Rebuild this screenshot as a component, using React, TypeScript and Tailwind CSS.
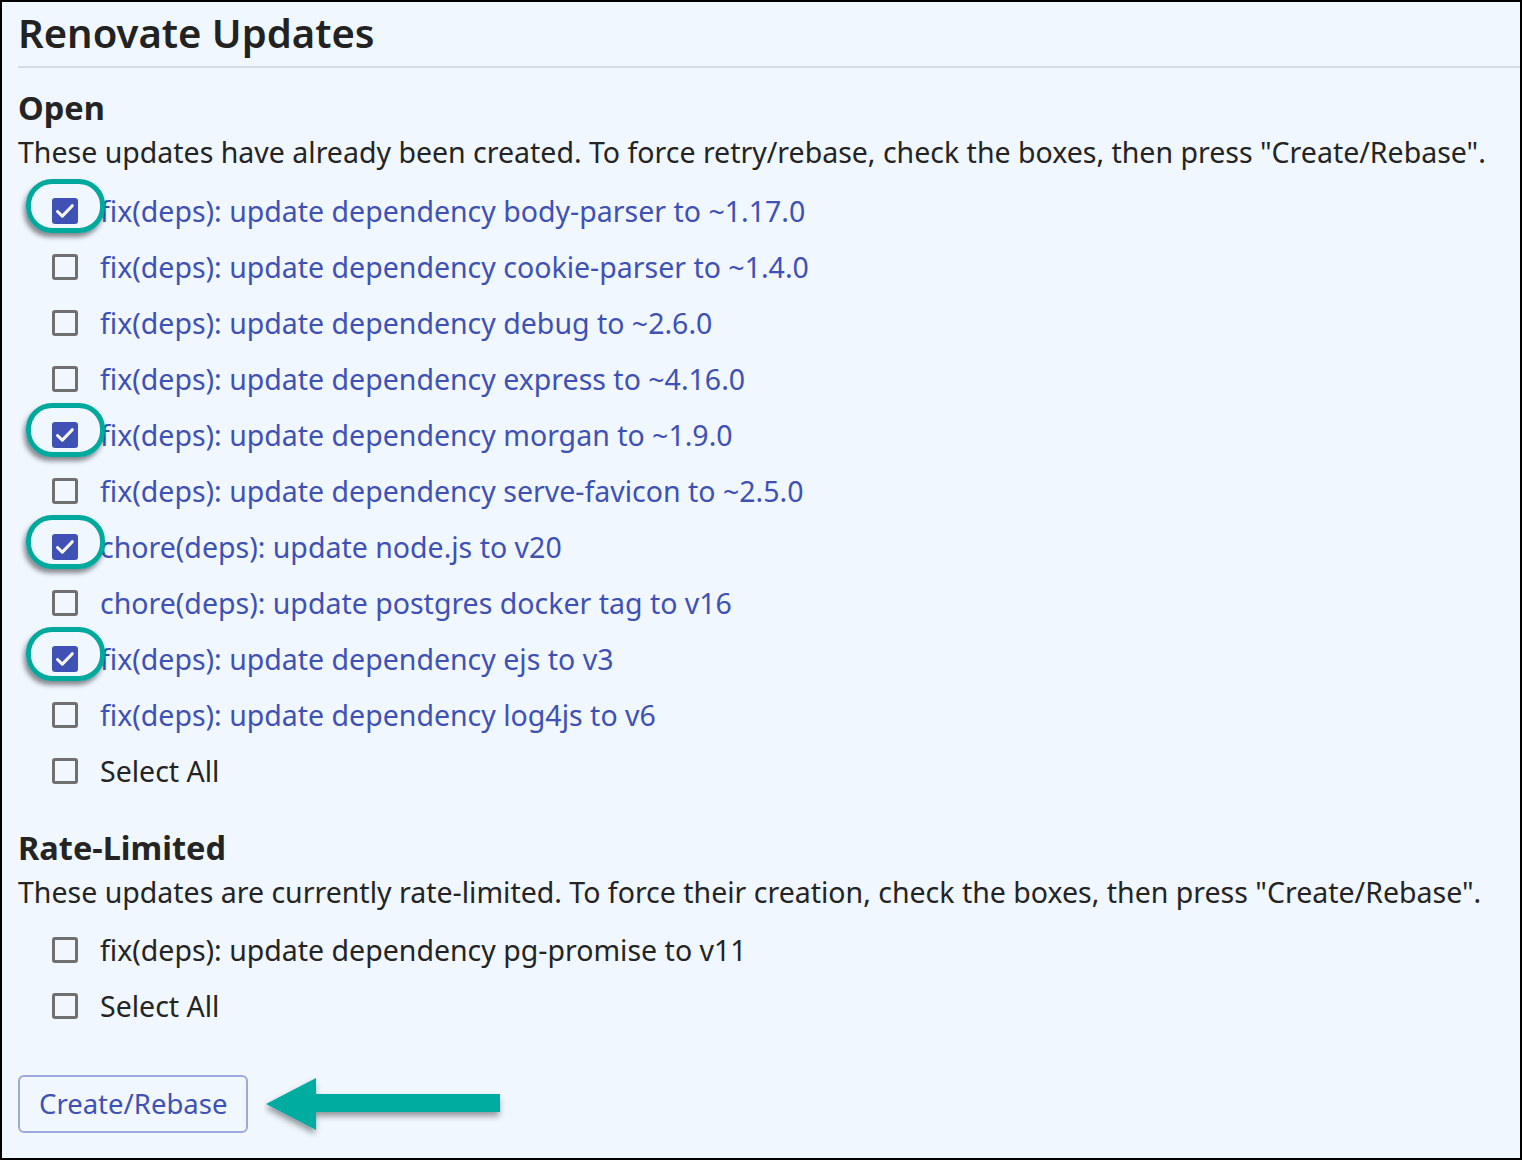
import React from 'react';

type Update = { title: string; checked?: boolean };

const openUpdates: Update[] = [
  { title: 'fix(deps): update dependency body-parser to ~1.17.0', checked: true },
  { title: 'fix(deps): update dependency cookie-parser to ~1.4.0' },
  { title: 'fix(deps): update dependency debug to ~2.6.0' },
  { title: 'fix(deps): update dependency express to ~4.16.0' },
  { title: 'fix(deps): update dependency morgan to ~1.9.0', checked: true },
  { title: 'fix(deps): update dependency serve-favicon to ~2.5.0' },
  { title: 'chore(deps): update node.js to v20', checked: true },
  { title: 'chore(deps): update postgres docker tag to v16' },
  { title: 'fix(deps): update dependency ejs to v3', checked: true },
  { title: 'fix(deps): update dependency log4js to v6' },
];

const rateLimited: Update[] = [
  { title: 'fix(deps): update dependency pg-promise to v11' },
];

const Checkbox = ({ checked }: { checked?: boolean }) =>
  checked ? (
    <span className="flex h-[26px] w-[26px] shrink-0 items-center justify-center rounded-[3px] bg-[#3f51b5]">
      <svg width="26" height="26" viewBox="0 0 26 26" fill="none">
        <path
          d="M5.5 13.5l4.8 4.6 10-10.4"
          stroke="white"
          strokeWidth="3"
          strokeLinecap="round"
          strokeLinejoin="round"
        />
      </svg>
    </span>
  ) : (
    <span className="h-[26px] w-[26px] shrink-0 rounded-[3px] border-[3px] border-[#707070]" />
  );

const Row = ({
  label,
  checked,
  link = true,
}: {
  label: string;
  checked?: boolean;
  link?: boolean;
}) => (
  <div className="relative flex h-[56px] items-center gap-[22px] pl-[34px]">
    <Checkbox checked={checked} />
    <span className={link ? 'text-[#3f51b5]' : 'text-[#242424]'}>{label}</span>
    {checked && (
      <span className="pointer-events-none absolute left-[8px] top-[-4px] h-[54px] w-[79px] rounded-[26px] border-[5px] border-[#00a99d] shadow-[-2px_4px_5px_rgba(0,0,0,0.45)]" />
    )}
  </div>
);

const App = () => {
  return (
    <div
      className="box-border flex h-[1160px] w-[1522px] flex-col border-2 border-black bg-[#f0f7ff] pl-[16px] text-[28.5px] leading-[34px] text-[#242424]"
      style={{ fontFamily: '"Noto Sans", "Open Sans", sans-serif' }}
    >
      <h1 className="pt-[7px] text-[40px] font-semibold leading-[48px] text-[#222]">
        Renovate Updates
      </h1>
      <div className="mt-[9px] h-[2px] bg-[#d5dae3]" />
      <h2 className="mt-[20px] text-[32.5px] font-bold leading-[40px]">Open</h2>
      <p className="mt-[7px]">
        These updates have already been created. To force retry/rebase, check the boxes, then press
        &quot;Create/Rebase&quot;.
      </p>
      <div className="mt-[14px] flex flex-col">
        {openUpdates.map((u) => (
          <Row key={u.title} label={u.title} checked={u.checked} />
        ))}
        <Row label="Select All" link={false} />
      </div>
      <h2 className="mt-[29px] text-[32.5px] font-bold leading-[40px]">Rate-Limited</h2>
      <p className="mt-[7px]">
        These updates are currently rate-limited. To force their creation, check the boxes, then press
        &quot;Create/Rebase&quot;.
      </p>
      <div className="mt-[13px] flex flex-col">
        {rateLimited.map((u) => (
          <Row key={u.title} label={u.title} checked={u.checked} link={false} />
        ))}
        <Row label="Select All" link={false} />
      </div>
      <div className="mt-[36px] flex items-center gap-[16px]">
        <button className="h-[58px] rounded-[6px] border-2 border-[#9ea7df] px-[19px] text-[27.5px] leading-[34px] text-[#3f51b5]">
          Create/Rebase
        </button>
        <svg width="244" height="64" viewBox="0 0 244 64" className="mt-[4px]">
          <defs>
            <filter id="sh" x="-10%" y="-20%" width="120%" height="150%">
              <feDropShadow dx="-1" dy="4" stdDeviation="3" floodColor="#000" floodOpacity="0.4" />
            </filter>
          </defs>
          <path
            d="M2 30 L52 4 L52 20 L236 20 L236 38 L52 38 L52 56 Z"
            fill="#00aba0"
            filter="url(#sh)"
          />
        </svg>
      </div>
    </div>
  );
};

export default App;
